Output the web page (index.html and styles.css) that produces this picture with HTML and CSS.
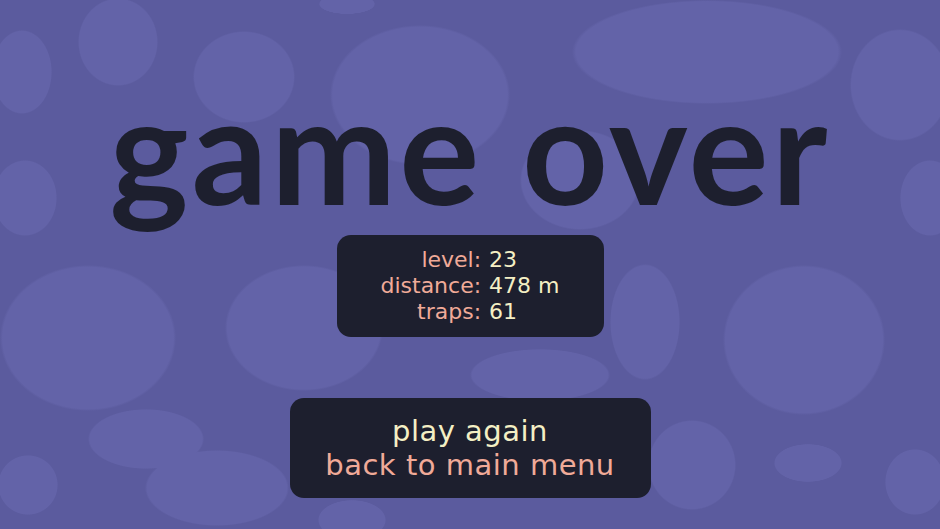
FILE: index.html
```html
<!DOCTYPE html>
<html lang="en">
<head>
  <meta charset="UTF-8" />
  <meta name="viewport" content="width=device-width, initial-scale=1" />
  <title>Game Over</title>
  <link rel="stylesheet" href="styles.css">
</head>
<body>

  <main class="screen">
    <h1 class="titulo">game over</h1>

    <div class="stats">
      <span class="label">level:</span><span class="valor">23</span>
      <span class="label">distance:</span><span class="valor">478 m</span>
      <span class="label">traps:</span><span class="valor">61</span>
    </div>

    <div class="menu">
      <button class="menu-item play">play again</button>
      <button class="menu-item back">back to main menu</button>
    </div>
  </main>

</body>
</html>
```

FILE: styles.css
```css
* {
  box-sizing: border-box;
  margin: 0;
  padding: 0;
}

html, body {
  width: 940px;
  height: 529px;
  overflow: hidden;
}

body {
  font-family: "DejaVu Sans", "Noto Sans", sans-serif;
  background-color: #5b5b9e;
  /* manchas do fundo */
  background-image:
    radial-gradient(ellipse 40px 44px at 118px 42px, #6363a8 97%, transparent 100%),
    radial-gradient(ellipse 30px 42px at 22px 72px, #6363a8 97%, transparent 100%),
    radial-gradient(ellipse 51px 46px at 244px 77px, #6363a8 97%, transparent 100%),
    radial-gradient(ellipse 28px 10px at 347px 4px, #6363a8 97%, transparent 100%),
    radial-gradient(ellipse 90px 70px at 420px 95px, #6363a8 97%, transparent 100%),
    radial-gradient(ellipse 135px 52px at 707px 52px, #6363a8 97%, transparent 100%),
    radial-gradient(ellipse 50px 56px at 900px 85px, #6363a8 97%, transparent 100%),
    radial-gradient(ellipse 30px 38px at 930px 198px, #6363a8 97%, transparent 100%),
    radial-gradient(ellipse 32px 38px at 25px 198px, #6363a8 97%, transparent 100%),
    radial-gradient(ellipse 60px 50px at 580px 180px, #6363a8 97%, transparent 100%),
    radial-gradient(ellipse 88px 73px at 88px 338px, #6363a8 97%, transparent 100%),
    radial-gradient(ellipse 79px 63px at 304px 328px, #6363a8 97%, transparent 100%),
    radial-gradient(ellipse 58px 30px at 146px 439px, #6363a8 97%, transparent 100%),
    radial-gradient(ellipse 72px 38px at 217px 488px, #6363a8 97%, transparent 100%),
    radial-gradient(ellipse 30px 30px at 28px 485px, #6363a8 97%, transparent 100%),
    radial-gradient(ellipse 34px 20px at 352px 520px, #6363a8 97%, transparent 100%),
    radial-gradient(ellipse 81px 75px at 804px 340px, #6363a8 97%, transparent 100%),
    radial-gradient(ellipse 34px 19px at 808px 463px, #6363a8 97%, transparent 100%),
    radial-gradient(ellipse 30px 33px at 915px 482px, #6363a8 97%, transparent 100%),
    radial-gradient(ellipse 44px 45px at 692px 465px, #6363a8 97%, transparent 100%),
    radial-gradient(ellipse 35px 58px at 645px 322px, #6363a8 97%, transparent 100%),
    radial-gradient(ellipse 70px 26px at 540px 375px, #6363a8 97%, transparent 100%);
  background-repeat: no-repeat;
}

.screen {
  display: flex;
  flex-direction: column;
  align-items: center;
  padding-top: 87px;
}

.titulo {
  font-family: Lato, "DejaVu Sans", sans-serif;
  font-size: 150px;
  font-weight: 700;
  line-height: 120px;
  color: #1d1f2e;
  letter-spacing: 3px;
  margin-bottom: 28px;
}

.stats {
  width: 267px;
  height: 102px;
  background: #1d1f2e;
  border-radius: 14px;
  padding-top: 12px;
  display: grid;
  grid-template-columns: auto auto;
  justify-content: center;
  align-content: start;
  column-gap: 8px;
  font-size: 22px;
  line-height: 26px;
}

.label {
  text-align: right;
  color: #f0aa98;
}

.valor {
  color: #f4efc4;
}

.menu {
  width: 361px;
  height: 100px;
  margin-top: 61px;
  background: #1d1f2e;
  border-radius: 14px;
  padding-top: 16px;
  display: flex;
  flex-direction: column;
  align-items: center;
}

.menu-item {
  border: none;
  background: none;
  font-family: inherit;
  font-size: 29px;
  letter-spacing: 0.5px;
  line-height: 34px;
  cursor: pointer;
}

.play {
  color: #f4efc4;
}

.back {
  color: #f0aa98;
}
```
